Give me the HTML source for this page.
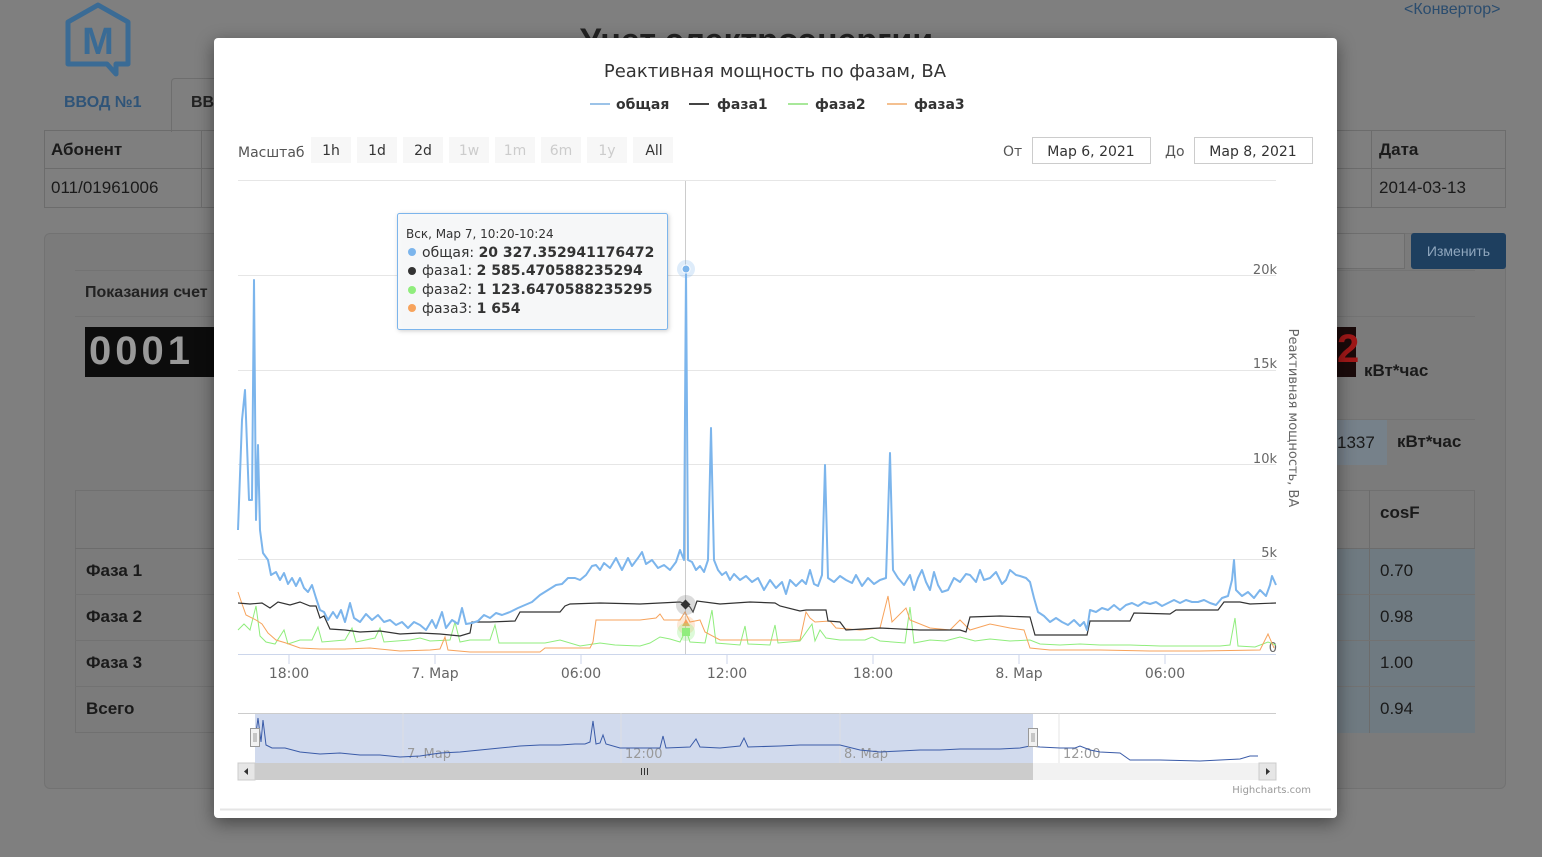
<!DOCTYPE html>
<html><head><meta charset="utf-8"><style>
*{box-sizing:border-box;margin:0;padding:0}
body{width:1542px;height:857px;overflow:hidden;background:#7f7f7f;font-family:"Liberation Sans",sans-serif;position:relative;color:#1a1a1a}
.a{position:absolute}
.b{font-weight:bold}
.modal{position:absolute;left:214px;top:38px;width:1123px;height:780px;background:#fff;border-radius:4px;box-shadow:0 5px 18px rgba(0,0,0,.45);font-family:"DejaVu Sans","Liberation Sans",sans-serif}
.btn{position:absolute;top:98px;height:26px;background:#f7f7f7;font-size:14px;color:#333;text-align:center;line-height:26px}
.dis{color:#ccc}
.inp{position:absolute;top:99px;height:27px;border:1px solid #ccc;font-size:14px;color:#333;line-height:25px;padding-left:12px}
</style></head><body>
<!-- background page -->
<svg class="a" style="left:62px;top:2px" width="72" height="76" viewBox="0 0 72 76"><path d="M36 3 L66 20 L66 62 L54 62 L54 72 L45 62 L6 62 L6 20 Z" fill="none" stroke="#3a6b95" stroke-width="5" stroke-linejoin="round"/><text x="36" y="52" text-anchor="middle" font-family="Liberation Sans" font-weight="bold" font-size="38" fill="#3a6b95">M</text></svg>
<div class="a b" style="left:580px;top:22px;font-size:34px;color:#222">Учет электроэнергии</div>
<div class="a" style="left:1404px;top:1px;font-size:16px;color:#2a4c6e">&lt;Конвертор&gt;</div>
<div class="a b" style="left:64px;top:94px;font-size:16px;color:#2f5478">ВВОД №1</div>
<div class="a" style="left:171px;top:78px;width:60px;height:54px;border:1px solid #6e6e6e;border-bottom:none;border-radius:4px 4px 0 0;background:#7f7f7f"></div>
<div class="a b" style="left:191px;top:94px;font-size:16px;color:#222">ВВ</div>
<div class="a" style="left:44px;top:130px;width:1462px;height:78px;border:1px solid #6c6c6c"></div>
<div class="a" style="left:44px;top:168px;width:1462px;height:1px;background:#6c6c6c"></div>
<div class="a" style="left:201px;top:130px;width:1px;height:78px;background:#6c6c6c"></div>
<div class="a" style="left:1371px;top:130px;width:1px;height:78px;background:#6c6c6c"></div>
<div class="a b" style="left:51px;top:140px;font-size:17px">Абонент</div>
<div class="a" style="left:51px;top:178px;font-size:17px">011/01961006</div>
<div class="a b" style="left:1379px;top:140px;font-size:17px">Дата</div>
<div class="a" style="left:1379px;top:178px;font-size:17px">2014-03-13</div>
<div class="a" style="left:44px;top:233px;width:1462px;height:556px;border:1px solid #727272;border-radius:6px;background:#7b7b7b"></div>
<div class="a" style="left:1330px;top:233px;width:75px;height:36px;border:1px solid #6e6e6e;background:#808080"></div>
<div class="a" style="left:1411px;top:233px;width:95px;height:36px;background:#1e3f5f;border-radius:3px;color:#8fa6bd;font-size:14px;line-height:36px;text-align:center">Изменить</div>
<div class="a" style="left:75px;top:270px;width:1400px;height:1px;background:#737373"></div>
<div class="a b" style="left:85px;top:284px;font-size:16px;color:#222">Показания счет</div>
<div class="a" style="left:75px;top:316px;width:1400px;height:1px;background:#737373"></div>
<div class="a" style="left:85px;top:327px;width:130px;height:50px;background:#0c0c0c;color:#999;font-size:40px;font-weight:bold;line-height:48px;letter-spacing:4px;padding-left:4px">0001</div>
<div class="a" style="left:1337px;top:327px;width:19px;height:50px;background:#1a0a0a;color:#a01818;font-size:40px;font-weight:bold;line-height:44px">2</div>
<div class="a b" style="left:1364px;top:361px;font-size:17px">кВт*час</div>
<div class="a" style="left:1337px;top:419px;width:138px;height:1px;background:#737373"></div>
<div class="a" style="left:1337px;top:420px;width:50px;height:45px;background:#76818a;font-size:17px;line-height:45px">1337</div>
<div class="a b" style="left:1397px;top:432px;font-size:17px">кВт*час</div>
<div class="a" style="left:75px;top:490px;width:1400px;height:243px;border:1px solid #707070"></div>
<div class="a" style="left:1337px;top:548px;width:138px;height:185px;background:#6f7a81"></div>
<div class="a" style="left:1369px;top:490px;width:1px;height:243px;background:#6c6c6c"></div>
<div class="a" style="left:75px;top:548px;width:1400px;height:1px;background:#6c6c6c"></div>
<div class="a" style="left:75px;top:594px;width:1400px;height:1px;background:#727272"></div>
<div class="a" style="left:75px;top:640px;width:1400px;height:1px;background:#727272"></div>
<div class="a" style="left:75px;top:686px;width:1400px;height:1px;background:#727272"></div>
<div class="a b" style="left:1380px;top:503px;font-size:17px">cosF</div>
<div class="a b" style="left:86px;top:561px;font-size:17px">Фаза 1</div>
<div class="a b" style="left:86px;top:607px;font-size:17px">Фаза 2</div>
<div class="a b" style="left:86px;top:653px;font-size:17px">Фаза 3</div>
<div class="a b" style="left:86px;top:699px;font-size:17px">Всего</div>
<div class="a" style="left:1380px;top:561px;font-size:17px">0.70</div>
<div class="a" style="left:1380px;top:607px;font-size:17px">0.98</div>
<div class="a" style="left:1380px;top:653px;font-size:17px">1.00</div>
<div class="a" style="left:1380px;top:699px;font-size:17px">0.94</div>

<div class="modal"></div>
<svg class="a" style="left:0;top:0" width="1542" height="857" font-family="DejaVu Sans, Liberation Sans, sans-serif">
<text x="775" y="77" text-anchor="middle" font-size="18" fill="#333">Реактивная мощность по фазам, ВА</text>
<g font-size="14" font-weight="bold" fill="#333">
<line x1="590" y1="104" x2="610" y2="104" stroke="#9cc3e8" stroke-width="2"/><text x="616" y="109">общая</text>
<line x1="689" y1="104" x2="709" y2="104" stroke="#444" stroke-width="2"/><text x="717" y="109">фаза1</text>
<line x1="788" y1="104" x2="808" y2="104" stroke="#a8e89a" stroke-width="2"/><text x="815" y="109">фаза2</text>
<line x1="887" y1="104" x2="907" y2="104" stroke="#f4c090" stroke-width="2"/><text x="914" y="109">фаза3</text>
</g>
<text x="238" y="157" font-size="14" fill="#555">Масштаб</text>
<g font-size="14" text-anchor="middle">
<rect x="311" y="137" width="40" height="26" fill="#f7f7f7"/><text x="331" y="155" fill="#333">1h</text>
<rect x="357" y="137" width="40" height="26" fill="#f7f7f7"/><text x="377" y="155" fill="#333">1d</text>
<rect x="403" y="137" width="40" height="26" fill="#f7f7f7"/><text x="423" y="155" fill="#333">2d</text>
<rect x="449" y="137" width="40" height="26" fill="#f7f7f7"/><text x="469" y="155" fill="#ccc">1w</text>
<rect x="495" y="137" width="40" height="26" fill="#f7f7f7"/><text x="515" y="155" fill="#ccc">1m</text>
<rect x="541" y="137" width="40" height="26" fill="#f7f7f7"/><text x="561" y="155" fill="#ccc">6m</text>
<rect x="587" y="137" width="40" height="26" fill="#f7f7f7"/><text x="607" y="155" fill="#ccc">1y</text>
<rect x="633" y="137" width="40" height="26" fill="#f7f7f7"/><text x="654" y="155" fill="#333">All</text>
</g>
<text x="1003" y="156" font-size="14" fill="#555">От</text>
<rect x="1032.5" y="137.5" width="118" height="26" fill="#fff" stroke="#ccc"/><text x="1091" y="156" font-size="14" fill="#333" text-anchor="middle">Мар 6, 2021</text>
<text x="1165" y="156" font-size="14" fill="#555">До</text>
<rect x="1194.5" y="137.5" width="118" height="26" fill="#fff" stroke="#ccc"/><text x="1253" y="156" font-size="14" fill="#333" text-anchor="middle">Мар 8, 2021</text>
<g stroke="#e6e6e6" stroke-width="1">
<line x1="238" y1="180.5" x2="1276" y2="180.5"/><line x1="238" y1="275.5" x2="1276" y2="275.5"/><line x1="238" y1="370.5" x2="1276" y2="370.5"/><line x1="238" y1="464.5" x2="1276" y2="464.5"/><line x1="238" y1="559.5" x2="1276" y2="559.5"/>
</g>
<line x1="238" y1="654.5" x2="1276" y2="654.5" stroke="#ccd6eb"/>
<g font-size="13" fill="#666" text-anchor="end"><text x="1277" y="274">20k</text><text x="1277" y="368">15k</text><text x="1277" y="463">10k</text><text x="1277" y="557">5k</text><text x="1277" y="652">0</text></g>
<text transform="translate(1289,418) rotate(90)" font-size="13" fill="#666" text-anchor="middle">Реактивная мощность, ВА</text>
<g font-size="14" fill="#666" text-anchor="middle"><text x="289" y="678">18:00</text><text x="435" y="678">7. Мар</text><text x="581" y="678">06:00</text><text x="727" y="678">12:00</text><text x="873" y="678">18:00</text><text x="1019" y="678">8. Мар</text><text x="1165" y="678">06:00</text></g>
<g stroke="#ccd6eb"><line x1="289" y1="654" x2="289" y2="664"/><line x1="435" y1="654" x2="435" y2="664"/><line x1="581" y1="654" x2="581" y2="664"/><line x1="727" y1="654" x2="727" y2="664"/><line x1="873" y1="654" x2="873" y2="664"/><line x1="1019" y1="654" x2="1019" y2="664"/><line x1="1165" y1="654" x2="1165" y2="664"/></g>
<line x1="685.5" y1="181" x2="685.5" y2="654" stroke="#ccc"/>
<!-- green -->
<polyline fill="none" stroke="#90ed7d" stroke-width="1" points="238,630 244,624 250,630 256,606 260,636 266,642 275,644 284,630 288,644 300,640 312,640 318,627 322,642 345,640 352,628 356,642 375,638 380,628 384,642 410,640 420,638 430,641 450,640 455,622 460,642 470,640 490,640 495,625 499,643 520,643 545,643 560,640 580,646 600,643 615,645 640,646 650,643 660,637 670,639 680,642 686,630 690,642 705,643 712,610 716,643 740,645 745,626 748,644 770,645 775,625 778,643 800,641 812,624 815,641 820,630 826,638 840,640 865,640 872,637 880,641 905,643 910,607 914,643 930,640 945,641 960,637 975,641 990,639 1010,641 1030,640 1040,644 1060,645 1080,644 1100,645 1130,645 1160,646 1190,646 1220,646 1230,645 1235,618 1238,646 1255,647 1268,642 1276,645"/>
<!-- orange -->
<polyline fill="none" stroke="#f7a35c" stroke-width="1" points="238,592 241,601 246,615 256,620 262,624 268,633 276,640 286,643 300,648 320,649 345,649 370,648 400,651 430,650 440,649 445,637 448,650 470,652 500,652 520,652 540,652 545,648 590,648 593,642 596,620 640,620 656,618 660,614 664,620 680,620 685,612 690,622 700,620 705,632 720,640 760,640 790,640 800,640 806,612 810,618 815,622 830,621 836,628 860,630 880,628 888,596 892,622 906,608 910,620 930,628 950,630 960,620 970,630 990,624 1010,628 1024,630 1030,648 1050,650 1100,650 1150,651 1200,651 1260,650 1268,634 1274,648"/>
<!-- black -->
<polyline fill="none" stroke="#333" stroke-width="1.2" points="238,603 250,604 262,603 270,608 278,602 290,605 300,602 310,606 316,606 320,618 324,616 330,629 345,630 360,632 380,631 400,634 420,633 440,634 460,636 470,633 472,622 490,622 515,621 520,612 560,612 565,606 570,604 600,603 640,604 680,602 686,604 690,607 693,612 697,601 720,604 750,602 775,603 780,606 800,611 806,610 818,610 826,610 828,621 840,622 846,630 880,628 920,630 960,630 966,632 970,617 1000,616 1030,617 1035,635 1087,635 1090,621 1130,621 1134,613 1170,614 1176,610 1218,610 1224,602 1240,602 1250,604 1276,603"/>
<!-- blue -->
<polyline fill="none" stroke="#7cb5ec" stroke-width="2" stroke-linejoin="round" points="238,530 242,420 245,390 249,500 252,500 254,280 256,520 258,445 260,530 263,553 268,560 271,575 276,572 280,580 284,573 288,584 292,578 296,586 300,578 304,588 308,592 312,585 316,598 320,610 324,612 328,620 333,612 337,618 341,610 345,622 350,603 354,618 360,622 366,614 372,620 378,615 384,622 390,620 396,625 402,622 408,628 414,622 420,625 426,630 432,620 436,628 442,612 446,628 452,620 458,624 462,608 466,624 472,623 478,621 484,615 490,618 496,613 502,615 510,612 518,608 525,605 532,602 540,595 548,590 556,585 562,584 568,578 575,578 580,580 586,575 592,566 596,565 600,570 604,563 610,568 616,558 622,570 628,558 632,566 638,558 642,552 646,564 652,560 658,568 664,565 670,570 676,562 680,550 684,560 686,268 688,560 692,562 696,570 700,566 704,572 708,560 711,428 714,560 718,570 722,575 726,572 730,580 734,574 740,580 746,576 752,582 758,578 764,590 770,580 776,588 782,582 786,594 790,580 796,586 802,580 806,584 810,570 814,584 818,586 822,575 825,465 828,578 834,582 840,576 846,580 852,583 856,575 862,586 868,578 874,584 880,580 886,578 890,453 893,570 898,578 904,585 910,575 914,590 918,578 922,570 926,582 930,590 934,572 938,585 942,592 948,590 954,578 960,582 966,574 970,575 976,582 980,570 984,580 990,578 996,572 1002,584 1006,580 1010,570 1016,575 1020,576 1026,578 1030,582 1034,598 1038,612 1044,616 1050,622 1056,618 1062,622 1068,625 1074,620 1080,626 1084,622 1087,630 1090,610 1096,612 1102,608 1108,610 1114,605 1120,610 1126,605 1132,603 1138,606 1144,602 1150,604 1156,602 1162,606 1168,603 1174,600 1180,603 1186,600 1192,602 1198,602 1204,600 1210,603 1216,605 1222,598 1228,596 1232,580 1234,560 1236,590 1242,596 1248,592 1254,598 1260,590 1266,596 1270,585 1272,576 1276,585"/>
<circle cx="686" cy="269" r="9" fill="#7cb5ec" opacity="0.25"/><circle cx="686" cy="269" r="4" fill="#7cb5ec" stroke="#fff"/>
<circle cx="686" cy="605" r="10" fill="#888" opacity="0.3"/><rect x="682" y="601" width="7" height="7" fill="#333" transform="rotate(45 685.5 604.5)"/>
<circle cx="686" cy="625" r="9" fill="#f7a35c" opacity="0.25"/><polygon points="686,619 690,626 682,626" fill="#f7a35c"/>
<circle cx="686" cy="632" r="9" fill="#90ed7d" opacity="0.3"/><rect x="682" y="628" width="8" height="8" fill="#90ed7d"/>
<!-- tooltip -->
<rect x="397.5" y="213.5" width="270" height="116" rx="2" fill="#f8f9fa" fill-opacity="0.96" stroke="#7cb5ec" filter="drop-shadow(1px 1px 2px rgba(0,0,0,.2))"/>
<g font-size="12"><text x="406" y="238" fill="#333">Вск, Мар 7, 10:20-10:24</text></g>
<g font-size="14" fill="#333">
<circle cx="412" cy="252" r="4" fill="#7cb5ec"/><text x="422" y="257">общая: <tspan font-weight="bold">20 327.352941176472</tspan></text>
<circle cx="412" cy="271" r="4" fill="#333"/><text x="422" y="275">фаза1: <tspan font-weight="bold">2 585.470588235294</tspan></text>
<circle cx="412" cy="290" r="4" fill="#90ed7d"/><text x="422" y="294">фаза2: <tspan font-weight="bold">1 123.6470588235295</tspan></text>
<circle cx="412" cy="308" r="4" fill="#f7a35c"/><text x="422" y="313">фаза3: <tspan font-weight="bold">1 654</tspan></text>
</g>
<!-- navigator -->
<rect x="255" y="713" width="778" height="50" fill="#ccd6eb" fill-opacity="0.9"/>
<line x1="238" y1="713.5" x2="1276" y2="713.5" stroke="#ccc"/>
<g stroke="#e0e0e0" opacity="0.8"><line x1="403" y1="713" x2="403" y2="763"/><line x1="621" y1="713" x2="621" y2="763"/><line x1="840" y1="713" x2="840" y2="763"/><line x1="1059" y1="713" x2="1059" y2="763"/></g>
<g font-size="13" fill="#999"><text x="407" y="758">7. Мар</text><text x="625" y="758">12:00</text><text x="844" y="758">8. Мар</text><text x="1063" y="758">12:00</text></g>
<polyline fill="none" stroke="#3a5ba8" stroke-width="1" points="255,740 258,718 261,742 263,720 266,745 272,748 285,748 300,752 320,754 340,753 360,755 380,755 400,757 420,756 440,753 460,752 480,750 500,748 520,746 540,745 560,745 575,744 585,744 590,742 593,721 596,744 600,743 603,735 606,744 620,748 640,748 660,748 663,736 666,748 690,747 696,739 700,747 720,748 740,746 744,738 748,747 780,746 800,745 820,745 840,745 860,750 880,752 900,751 920,750 940,750 960,749 980,749 1000,749 1020,748 1030,746 1040,747 1060,748 1075,748 1080,746 1090,750 1100,752 1120,753 1130,760 1160,760 1200,761 1240,759 1250,756 1258,756"/>
<rect x="238" y="763" width="1038" height="17" fill="#f2f2f2"/>
<rect x="255" y="763" width="778" height="17" fill="#cccccc"/>
<rect x="238" y="763" width="17" height="17" fill="#e6e6e6" stroke="#ccc"/><polygon points="248,768 248,775 244,771.5" fill="#333"/>
<rect x="1259" y="763" width="17" height="17" fill="#e6e6e6" stroke="#ccc"/><polygon points="1266,768 1266,775 1270,771.5" fill="#333"/>
<g stroke="#333"><line x1="641.5" y1="768" x2="641.5" y2="775"/><line x1="644.5" y1="768" x2="644.5" y2="775"/><line x1="647.5" y1="768" x2="647.5" y2="775"/></g>
<rect x="250.5" y="728.5" width="9" height="18" fill="#f2f2f2" stroke="#999"/><line x1="254" y1="733" x2="254" y2="742" stroke="#999"/><line x1="256" y1="733" x2="256" y2="742" stroke="#999"/>
<rect x="1028.5" y="728.5" width="9" height="18" fill="#f2f2f2" stroke="#999"/><line x1="1032" y1="733" x2="1032" y2="742" stroke="#999"/><line x1="1034" y1="733" x2="1034" y2="742" stroke="#999"/>
<text x="1311" y="793" font-size="10" fill="#999" text-anchor="end">Highcharts.com</text>
<line x1="220" y1="809.5" x2="1331" y2="809.5" stroke="#e5e5e5" stroke-width="2"/>
</svg>
</body></html>
